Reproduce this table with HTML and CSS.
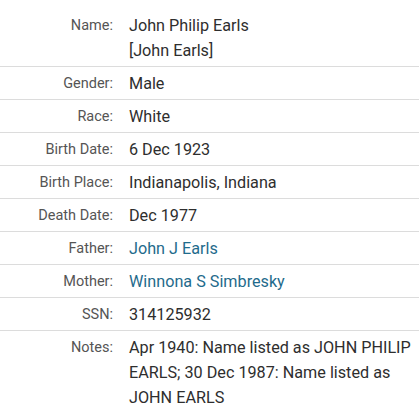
FILE: index.html
```html
<!DOCTYPE html>
<html>
<head>
<meta charset="utf-8">
<link rel="stylesheet" href="styles.css">
</head>
<body>
<div class="record">
  <div class="row"><div class="label">Name:</div><div class="value">John Philip Earls<br>[John Earls]</div></div>
  <div class="row"><div class="label">Gender:</div><div class="value">Male</div></div>
  <div class="row"><div class="label">Race:</div><div class="value">White</div></div>
  <div class="row"><div class="label">Birth Date:</div><div class="value">6 Dec 1923</div></div>
  <div class="row"><div class="label">Birth Place:</div><div class="value">Indianapolis, Indiana</div></div>
  <div class="row"><div class="label">Death Date:</div><div class="value">Dec 1977</div></div>
  <div class="row"><div class="label">Father:</div><div class="value"><a class="link" href="#">John J Earls</a></div></div>
  <div class="row"><div class="label">Mother:</div><div class="value"><a class="link" href="#">Winnona S Simbresky</a></div></div>
  <div class="row"><div class="label">SSN:</div><div class="value">314125932</div></div>
  <div class="row"><div class="label">Notes:</div><div class="value">Apr 1940: Name listed as JOHN PHILIP EARLS; 30 Dec 1987: Name listed as JOHN EARLS</div></div>
</div>
</body>
</html>
```
FILE: styles.css
```css
html, body {
  margin: 0;
  padding: 0;
  background: #fff;
}
body {
  font-family: "Source Sans Pro", Roboto, "Liberation Sans", sans-serif;
  font-size: 16px;
  line-height: 25px;
  color: #333;
  padding-top: 9px;
}
.record {
  display: flex;
  flex-direction: column;
}
.row {
  display: grid;
  grid-template-columns: 113px 1fr;
  column-gap: 16px;
  padding: 4px 0 3px;
  border-top: 1px solid #dcdcdc;
}
.row:first-child {
  border-top: none;
}
.label {
  text-align: right;
  color: #555;
  font-size: 14.5px;
}
.value {
  color: #2e2e2e;
  font-size: 16.2px;
  padding-right: 8px;
}
.link {
  color: #1f6b8c;
  text-decoration: none;
}
```
